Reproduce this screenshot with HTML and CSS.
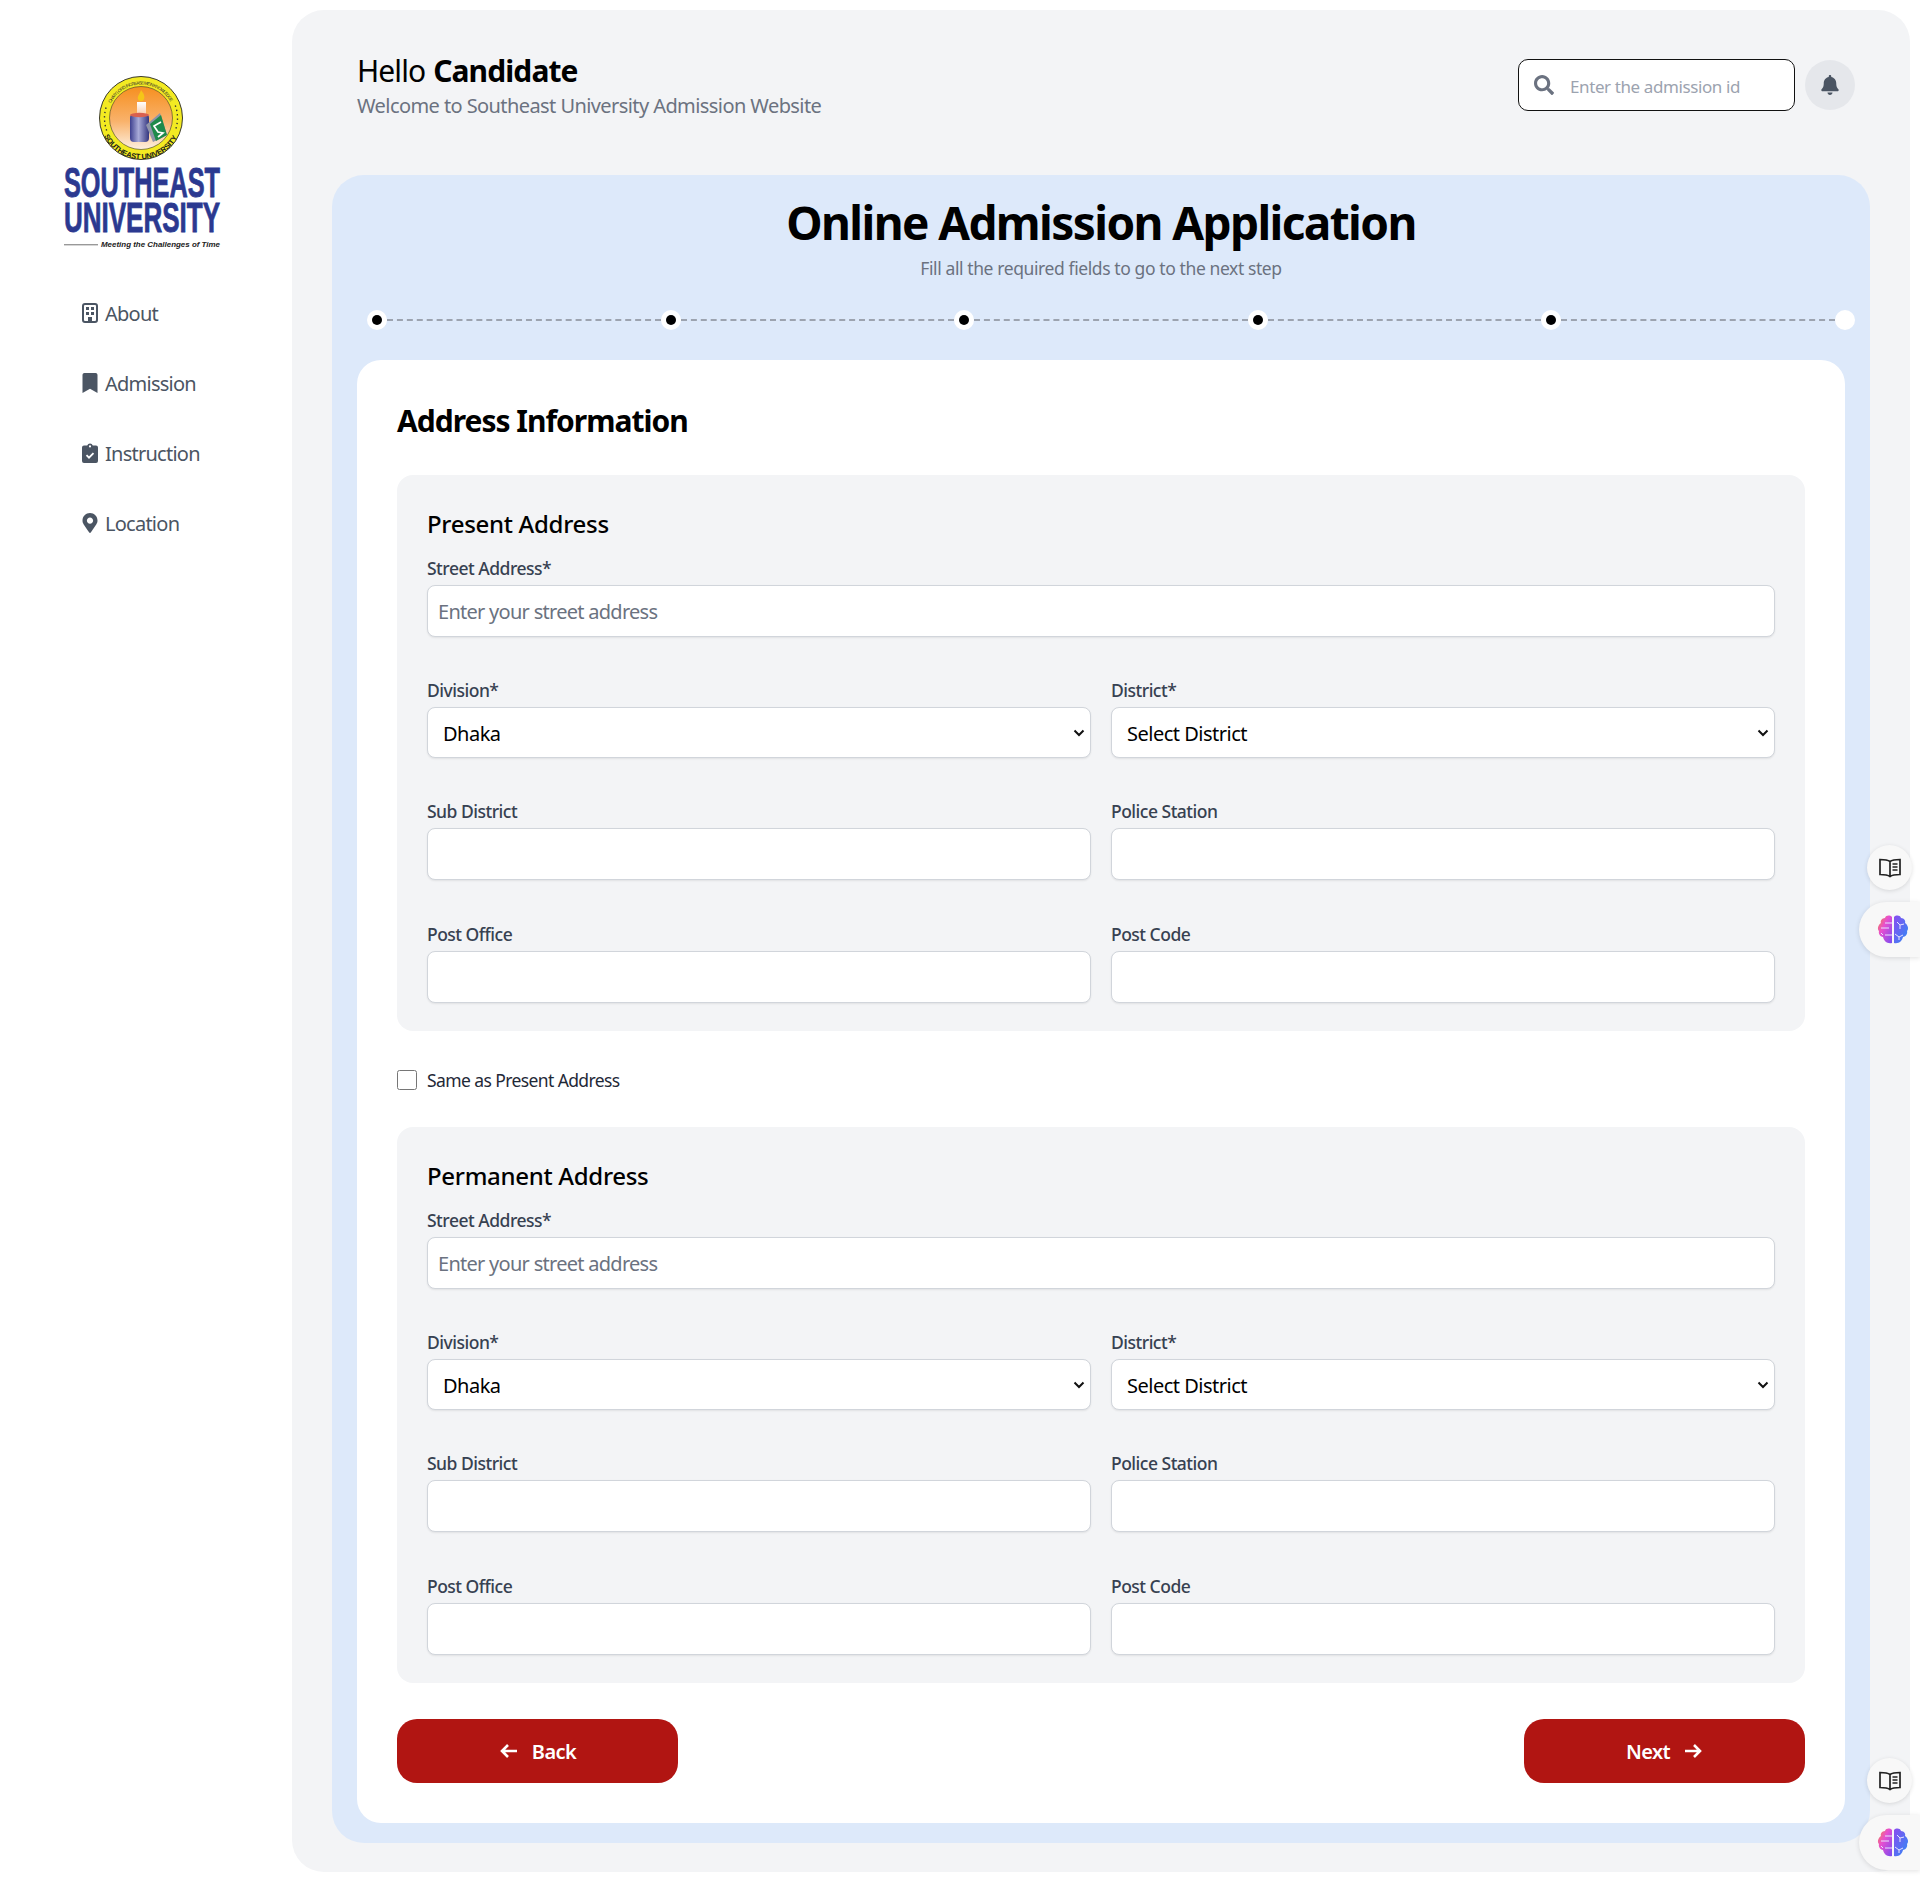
FILE: index.html
```html
<!DOCTYPE html>
<html lang="en">
<head>
<meta charset="utf-8">
<title>Online Admission Application</title>
<link rel="stylesheet" href="styles.css">
</head>
<body>
<div class="page">
  <aside class="sidebar">
    <svg class="logo" viewBox="0 0 164 185" xmlns="http://www.w3.org/2000/svg">
      <defs>
        <linearGradient id="sun" x1="0" y1="0" x2="0" y2="1"><stop offset="0" stop-color="#f68f1f"/><stop offset=".55" stop-color="#f9b26b"/><stop offset="1" stop-color="#fdf0e0"/></linearGradient>
        <linearGradient id="can" x1="0" y1="0" x2="1" y2="0"><stop offset="0" stop-color="#3d3f8f"/><stop offset=".45" stop-color="#a9abd8"/><stop offset="1" stop-color="#34367f"/></linearGradient>
        <linearGradient id="wax" x1="0" y1="0" x2="0" y2="1"><stop offset="0" stop-color="#fff"/><stop offset="1" stop-color="#f7b98a"/></linearGradient>
        <path id="ringTop" d="M50.900 33.300 A33.500 33.500 0 0 1 111.100 33.300"/>
        <path id="ringBot" d="M44.100 66 A41 41 0 0 0 117.900 66"/>
      </defs>
      <circle cx="81" cy="48" r="41.500" fill="#f3ea22" stroke="#3a3a2a" stroke-width="1"/>
      <circle cx="81" cy="48" r="31.500" fill="url(#sun)" stroke="#3a3a2a" stroke-width=".6"/>
      <path d="M46.700 60.500A36.500 36.500 0 0 1 46.700 35.500M115.300 35.500A36.500 36.500 0 0 1 115.300 60.500" fill="none" stroke="#333" stroke-width="1.400" stroke-dasharray="1.400 3"/>
      <text class="ring-small"><textPath href="#ringTop" textLength="73">OH MY LORD, INCREASE ME IN KNOWLEDGE</textPath></text>
      <text class="ring-big"><textPath href="#ringBot" textLength="90">SOUTHEAST UNIVERSITY</textPath></text>
      <rect x="77" y="32" width="9" height="18" fill="url(#wax)"/>
      <path d="M81 20c3 4 4 6 3 9s-5 3-6 0 2-5 3-9z" fill="#f5c518"/>
      <rect x="70" y="44" width="19" height="28" rx="4" fill="url(#can)"/>
      <ellipse cx="79.500" cy="45" rx="9.500" ry="2.200" fill="#d9604f"/>
      <path d="M86 55l14-12 7 22-14 7z" fill="#8f94a8"/>
      <path d="M90 54l11-9 6 20-11 6z" fill="#1e8a4b"/>
      <path d="M101 52l-7 4 4 6 5 1-5 4" fill="none" stroke="#fff" stroke-width="1.700"/>
      <text class="logo-big" x="4" y="127" textLength="156" lengthAdjust="spacingAndGlyphs">SOUTHEAST</text>
      <text class="logo-big" x="4" y="162" textLength="156" lengthAdjust="spacingAndGlyphs">UNIVERSITY</text>
      <rect x="4" y="174" width="34" height="1.400" fill="#999"/>
      <text class="logo-tag" x="41" y="177" textLength="119" lengthAdjust="spacingAndGlyphs">Meeting the Challenges of Time</text>
    </svg>
    <nav class="nav">
      <a class="nav-item" href="#">
        <svg class="nav-icon" viewBox="0 0 16 20"><rect x="1" y="1" width="14" height="18" rx="2" fill="none" stroke="currentColor" stroke-width="2"/><rect x="4" y="4" width="3" height="3" fill="currentColor"/><rect x="9" y="4" width="3" height="3" fill="currentColor"/><rect x="4" y="9" width="3" height="3" fill="currentColor"/><rect x="9" y="9" width="3" height="3" fill="currentColor"/><rect x="6" y="14" width="4" height="5" fill="currentColor"/></svg>
        <span>About</span>
      </a>
      <a class="nav-item" href="#">
        <svg class="nav-icon" viewBox="0 0 384 512"><path fill="currentColor" d="M0 512V48C0 21.490 21.490 0 48 0h288c26.510 0 48 21.490 48 48v464L192 400 0 512z"/></svg>
        <span>Admission</span>
      </a>
      <a class="nav-item" href="#">
        <svg class="nav-icon" viewBox="0 0 16 20"><path fill="currentColor" fill-rule="evenodd" d="M2 2.500h3.200a3 3 0 0 1 5.600 0H14a2 2 0 0 1 2 2V18a2 2 0 0 1-2 2H2a2 2 0 0 1-2-2V4.500a2 2 0 0 1 2-2zM8 2.300a1.100 1.100 0 1 0 0 2.200 1.100 1.100 0 0 0 0-2.200z"/><path d="M4.500 12.200l2.500 2.500 4.500-4.500" fill="none" stroke="#fff" stroke-width="1.800"/></svg>
        <span>Instruction</span>
      </a>
      <a class="nav-item" href="#">
        <svg class="nav-icon" viewBox="0 0 384 512"><path fill="currentColor" d="M172.268 501.670C26.970 291.031 0 262.007 0 192 0 85.961 85.961 0 192 0s192 85.961 192 192c0 70.007-26.970 99.031-172.268 309.670-9.535 13.774-29.930 13.773-39.464 0zM192 272c44.183 0 80-35.817 80-80s-35.817-80-80-80-80 35.817-80 80 35.817 80 80 80z"/></svg>
        <span>Location</span>
      </a>
    </nav>
  </aside>

  <main class="main">
    <header class="topbar">
      <div class="greeting">
        <h1 class="hello">Hello <strong>Candidate</strong></h1>
        <p class="welcome">Welcome to Southeast University Admission Website</p>
      </div>
      <div class="top-actions">
        <label class="search">
          <svg class="search-icon" viewBox="0 0 512 512"><path fill="currentColor" d="M505 442.700L405.300 343c-4.500-4.500-10.600-7-17-7H372c27.600-35.300 44-79.700 44-128C416 93.100 322.900 0 208 0S0 93.100 0 208s93.100 208 208 208c48.300 0 92.700-16.400 128-44v16.300c0 6.400 2.500 12.500 7 17l99.700 99.700c9.400 9.400 24.600 9.400 33.900 0l28.300-28.300c9.400-9.400 9.400-24.600.1-34zM208 336c-70.700 0-128-57.200-128-128 0-70.700 57.200-128 128-128 70.700 0 128 57.200 128 128 0 70.700-57.200 128-128 128z"/></svg>
          <input class="search-input" type="text" placeholder="Enter the admission id">
        </label>
        <button class="bell" type="button" aria-label="Notifications">
          <svg class="bell-icon" viewBox="0 0 448 512"><path fill="currentColor" d="M224 512c35.320 0 63.970-28.650 63.970-64H160.030c0 35.350 28.650 64 63.970 64zm215.390-149.710c-19.320-20.760-55.470-51.990-55.470-154.290 0-77.700-54.480-139.900-127.940-155.160V32c0-17.670-14.320-32-31.980-32s-31.980 14.330-31.980 32v20.840C118.560 68.100 64.080 130.300 64.080 208c0 102.300-36.150 133.530-55.470 154.290-6 6.450-8.660 14.160-8.610 21.710.11 16.400 12.980 32 32.100 32h383.800c19.120 0 32-15.600 32.100-32 .05-7.550-2.610-15.270-8.610-21.710z"/></svg>
        </button>
      </div>
    </header>

    <section class="panel">
      <h2 class="panel-title">Online Admission Application</h2>
      <p class="panel-sub">Fill all the required fields to go to the next step</p>
      <div class="stepper">
        <span class="dot done"></span><span class="dash"></span>
        <span class="dot done"></span><span class="dash"></span>
        <span class="dot done"></span><span class="dash"></span>
        <span class="dot done"></span><span class="dash"></span>
        <span class="dot done"></span><span class="dash"></span>
        <span class="dot"></span>
      </div>

      <form class="card">
        <h3 class="card-title">Address Information</h3>

        <fieldset class="block">
          <h4 class="block-title">Present Address</h4>
          <div class="grid">
            <div class="field wide"><label class="label">Street Address*</label><input class="control" type="text" placeholder="Enter your street address"></div>
            <div class="field"><label class="label">Division*</label><select class="control select"><option>Dhaka</option></select></div>
            <div class="field"><label class="label">District*</label><select class="control select"><option>Select District</option></select></div>
            <div class="field"><label class="label">Sub District</label><input class="control" type="text"></div>
            <div class="field"><label class="label">Police Station</label><input class="control" type="text"></div>
            <div class="field"><label class="label">Post Office</label><input class="control" type="text"></div>
            <div class="field"><label class="label">Post Code</label><input class="control" type="text"></div>
          </div>
        </fieldset>

        <label class="same"><input class="check" type="checkbox"><span>Same as Present Address</span></label>

        <fieldset class="block">
          <h4 class="block-title">Permanent Address</h4>
          <div class="grid">
            <div class="field wide"><label class="label">Street Address*</label><input class="control" type="text" placeholder="Enter your street address"></div>
            <div class="field"><label class="label">Division*</label><select class="control select"><option>Dhaka</option></select></div>
            <div class="field"><label class="label">District*</label><select class="control select"><option>Select District</option></select></div>
            <div class="field"><label class="label">Sub District</label><input class="control" type="text"></div>
            <div class="field"><label class="label">Police Station</label><input class="control" type="text"></div>
            <div class="field"><label class="label">Post Office</label><input class="control" type="text"></div>
            <div class="field"><label class="label">Post Code</label><input class="control" type="text"></div>
          </div>
        </fieldset>

        <div class="actions">
          <button class="btn" type="button">
            <svg class="arrow" viewBox="0 0 20 16"><path d="M18 8H3M9 2L3 8l6 6" fill="none" stroke="currentColor" stroke-width="2.600"/></svg>
            <span>Back</span>
          </button>
          <button class="btn" type="button">
            <span>Next</span>
            <svg class="arrow" viewBox="0 0 20 16"><path d="M2 8h15M11 2l6 6-6 6" fill="none" stroke="currentColor" stroke-width="2.600"/></svg>
          </button>
        </div>
      </form>
    </section>
  </main>
</div>

<div class="float-group first">
  <button class="float-book" type="button" aria-label="Dictionary">
    <svg class="book" viewBox="0 0 22 20"><path d="M11 3.500C9 2 5 1.500 1 1.500v15c4 0 8 .5 10 2 2-1.500 6-2 10-2v-15c-4 0-8 .5-10 2zM11 3.500v15" fill="none" stroke="#222" stroke-width="1.700"/><path d="M13.500 6h5M13.500 9h5M13.500 12h5" stroke="#222" stroke-width="1.500"/></svg>
  </button>
  <button class="float-brain" type="button" aria-label="Assistant">
    <svg class="brain" viewBox="0 0 32 30">
      <defs>
        <linearGradient id="bl1" x1="0" y1="0" x2="1" y2="1"><stop offset="0" stop-color="#f7863f"/><stop offset=".4" stop-color="#e84fd0"/><stop offset="1" stop-color="#7b4cf0"/></linearGradient>
        <linearGradient id="bl2" x1="0" y1="0" x2="1" y2="1"><stop offset="0" stop-color="#8a4df0"/><stop offset="1" stop-color="#2f8cf5"/></linearGradient>
      </defs>
      <path d="M15 2c-2-2-6-2-7 1-3 0-5 3-4 5-3 2-4 6-2 8-1 3 2 6 4 6 1 4 4 7 9 6z" fill="url(#bl1)"/>
      <path d="M17 2c2-2 6-2 7 1 3 0 5 3 4 5 3 2 4 6 2 8 1 3-2 6-4 6-1 4-4 7-9 6z" fill="url(#bl2)"/>
      <path d="M4 13h8M8 8h7M8 20h7M6 20l-2-2M23 10l-3-3M23 10l4-1M23 10v4M22 22l-4-3M22 22l4-2M22 22v3" fill="none" stroke="#e9e4ff" stroke-width="1"/>
    </svg>
  </button>
</div>
<div class="float-group second">
  <button class="float-book" type="button" aria-label="Dictionary">
    <svg class="book" viewBox="0 0 22 20"><path d="M11 3.500C9 2 5 1.500 1 1.500v15c4 0 8 .5 10 2 2-1.500 6-2 10-2v-15c-4 0-8 .5-10 2zM11 3.500v15" fill="none" stroke="#222" stroke-width="1.700"/><path d="M13.500 6h5M13.500 9h5M13.500 12h5" stroke="#222" stroke-width="1.500"/></svg>
  </button>
  <button class="float-brain" type="button" aria-label="Assistant">
    <svg class="brain" viewBox="0 0 32 30">
      <path d="M15 2c-2-2-6-2-7 1-3 0-5 3-4 5-3 2-4 6-2 8-1 3 2 6 4 6 1 4 4 7 9 6z" fill="url(#bl1)"/>
      <path d="M17 2c2-2 6-2 7 1 3 0 5 3 4 5 3 2 4 6 2 8 1 3-2 6-4 6-1 4-4 7-9 6z" fill="url(#bl2)"/>
      <path d="M4 13h8M8 8h7M8 20h7M6 20l-2-2M23 10l-3-3M23 10l4-1M23 10v4M22 22l-4-3M22 22l4-2M22 22v3" fill="none" stroke="#e9e4ff" stroke-width="1"/>
    </svg>
  </button>
</div>
</body>
</html>
```
FILE: styles.css
```css
* { box-sizing: border-box; }
html, body { margin: 0; padding: 0; }
body {
  position: relative;
  height: 1882px;
  overflow: hidden;
  background: #fff;
  font-family: "Noto Sans", "Open Sans", sans-serif;
  color: #000;
}
h1, h2, h3, h4, p { margin: 0; }
.page { display: flex; height: 1882px; }

/* sidebar */
.sidebar { width: 292px; flex-shrink: 0; padding: 70px 0 0 60px; }
.logo { display: block; width: 164px; height: 185px; overflow: visible; }
.logo-big { font: 700 42px "Liberation Sans", sans-serif; fill: #2b3990; stroke: #2b3990; stroke-width: .8px; }
.logo-tag { font: italic 700 8px "Liberation Sans", sans-serif; fill: #222; }
.ring-small { font: 4.500px "Liberation Sans", sans-serif; fill: #333; }
.ring-big { font: 700 7.500px "Liberation Sans", sans-serif; fill: #1a1a1a; }
.nav { display: flex; flex-direction: column; margin-top: 23px; }
.nav-item { display: flex; align-items: center; gap: 7px; height: 70px; padding-left: 22px; color: #4b5563; font-size: 20px; text-decoration: none; letter-spacing: -.75px; }
.nav-icon { width: 16px; height: 20px; flex-shrink: 0; }

/* main */
.main { width: 1618px; height: 1862px; margin-top: 10px; padding: 30px 40px 0; background: #f3f4f6; border-radius: 32px; }
.topbar { display: flex; align-items: center; justify-content: space-between; height: 90px; margin-bottom: 45px; padding: 0 15px 0 25px; }
.greeting { padding-top: 2px; }
.hello { font-size: 30px; font-weight: 400; line-height: 36px; letter-spacing: -.9px; word-spacing: 1px; }
.hello strong { font-weight: 700; }
.welcome { margin-top: 3px; font-size: 20px; line-height: 28px; color: #6b7280; letter-spacing: -.58px; }
.top-actions { display: flex; align-items: center; gap: 10px; }
.search { display: flex; align-items: center; width: 277px; height: 52px; padding-left: 15px; background: #fff; border: 1.5px solid #111; border-radius: 10px; }
.search-icon { width: 20px; height: 20px; color: #6b7280; flex-shrink: 0; }
.search-input { flex: 1; min-width: 0; margin-left: 14px; padding-top: 3px; border: 0; outline: 0; background: transparent; font: inherit; font-size: 17px; letter-spacing: -.4px; }
.search-input::placeholder { color: #9ca3af; }
.bell { display: flex; align-items: center; justify-content: center; width: 50px; height: 50px; padding: 0; border: 0; border-radius: 50%; background: #e5e7eb; color: #4b5563; }
.bell-icon { width: 18px; height: 20px; }

/* panel */
.panel { height: 1668px; padding: 19px 25px 20px; background: #dde9fa; border-radius: 32px; }
.panel-title { height: 56px; font-size: 46px; font-weight: 700; line-height: 56px; text-align: center; letter-spacing: -1.6px; }
.panel-sub { margin-top: 4px; font-size: 17.500px; line-height: 28px; text-align: center; color: #6b7280; letter-spacing: -.4px; }
.stepper { display: flex; align-items: center; margin: 28px -10px 0 10px; height: 20px; }
.dot { position: relative; width: 20px; height: 20px; flex-shrink: 0; border-radius: 50%; background: #fff; }
.dot.done::after { content: ""; position: absolute; left: 5px; top: 5px; width: 10px; height: 10px; border-radius: 50%; background: #000; }
.dash { flex: 1; border-top: 2px dashed #9ca3af; }

.card { height: 1463px; margin-top: 30px; padding: 40px; background: #fff; border-radius: 24px; }
.card-title { font-size: 30px; font-weight: 700; line-height: 42px; letter-spacing: -1px; }
.block { margin: 33px 0 0; padding: 33px 30px 0; height: 556px; border: 0; background: #f3f4f6; border-radius: 16px; }
.block-title { font-size: 24px; font-weight: 500; line-height: 32px; letter-spacing: -.3px; }
.grid { display: grid; grid-template-columns: 1fr 1fr; column-gap: 20px; row-gap: 41.200px; margin-top: 16px; }
.wide { grid-column: 1 / -1; }
.field { display: flex; flex-direction: column; }
.label { height: 24px; margin-bottom: 5px; font-size: 17.500px; font-weight: 500; line-height: 24px; color: #374151; letter-spacing: -.5px; }
.control { width: 100%; height: 52px; padding: 0 10px; background: #fff; border: 1px solid #d1d5db; border-radius: 8px; box-shadow: 0 1px 2px rgba(0,0,0,.08); font: inherit; font-size: 20px; color: #000; letter-spacing: -.5px; }
.control::placeholder { color: #6b7280; letter-spacing: -.72px; }
.select {
  height: 51px;
  padding: 2px 30px 0 15px;
  appearance: none;
  background-image: url("data:image/svg+xml,%3Csvg xmlns='http://www.w3.org/2000/svg' viewBox='0 0 12 8'%3E%3Cpath d='M1.500 1.500L6 6l4.500-4.500' fill='none' stroke='%23111' stroke-width='2'/%3E%3C/svg%3E");
  background-repeat: no-repeat;
  background-position: right 5px center;
  background-size: 12px 8px;
}
.same { display: flex; align-items: center; gap: 10px; height: 96px; padding-top: 1px; font-size: 17.500px; color: #1f2937; letter-spacing: -.6px; }
.same + .block { margin-top: 0; }
.check { width: 20px; height: 20px; margin: 0; }
.actions { display: flex; justify-content: space-between; margin-top: 36px; }
.btn { display: flex; align-items: center; justify-content: center; gap: 13px; width: 281px; height: 64px; padding: 0; border: 0; border-radius: 20px; background: #b11512; color: #fff; font: inherit; font-size: 20px; font-weight: 600; letter-spacing: -.6px; }
.arrow { width: 20px; height: 16px; }

/* floating helpers, over the page */
.float-group { position: absolute; right: 0; width: 61px; display: flex; flex-direction: column; align-items: flex-start; }
.float-group.first { top: 845px; gap: 12px; }
.float-group.second { top: 1758px; gap: 12px; }
.float-book { display: flex; align-items: center; justify-content: center; width: 45px; height: 45px; margin-left: 8px; padding: 0; border: 0; border-radius: 50%; background: #f8f8f8; box-shadow: 0 1px 4px rgba(0,0,0,.12); }
.book { width: 22px; height: 20px; }
.float-brain { display: flex; align-items: center; padding: 0 0 0 18px; width: 61px; height: 55px; border: 0; border-radius: 28px 0 0 28px; background: #f8f8f8; box-shadow: 0 1px 5px rgba(0,0,0,.12); }
.brain { width: 32px; height: 30px; flex-shrink: 0; }
```
